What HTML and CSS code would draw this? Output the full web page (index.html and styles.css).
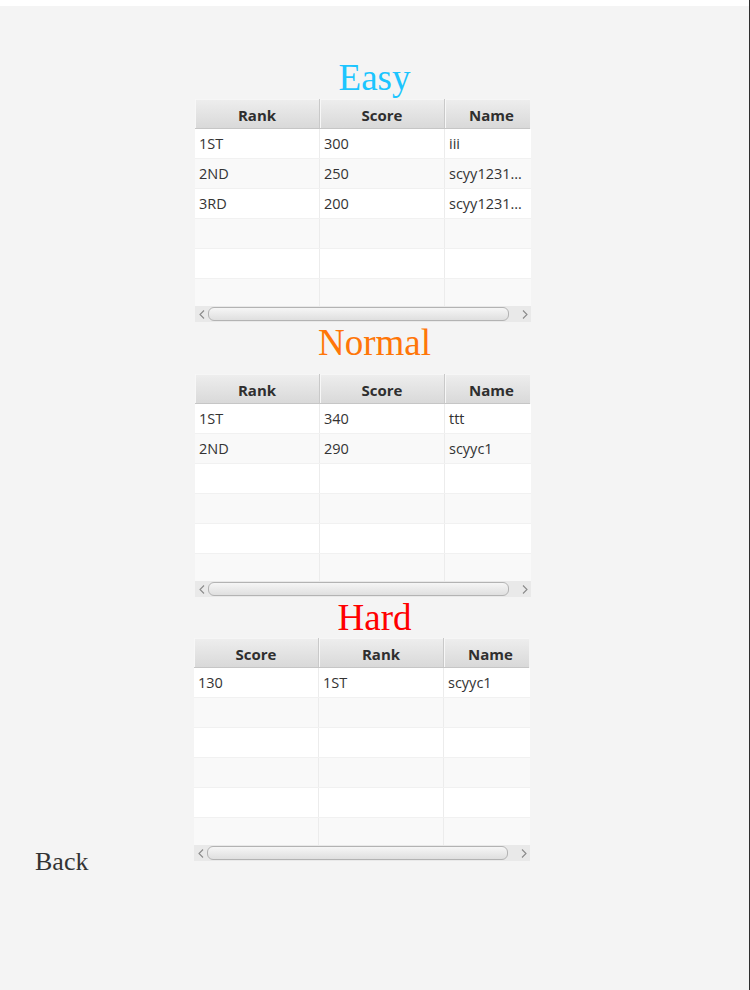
FILE: index.html
```html
<!DOCTYPE html>
<html lang="en">
<head>
<meta charset="utf-8">
<title>Leaderboard</title>
<link rel="stylesheet" href="styles.css">
</head>
<body>
<div class="app">
  <div class="topbar"></div>
  <main class="board">
    <section class="level level-easy">
      <h2 class="title easy">Easy</h2>
      <div class="row">
        <div class="side"></div>
        <div class="table">
          <div class="thead"><div class="th">Rank</div><div class="th">Score</div><div class="th">Name</div></div>
          <div class="tbody">
            <div class="tr"><div class="td">1ST</div><div class="td">300</div><div class="td">iii</div></div>
            <div class="tr"><div class="td">2ND</div><div class="td">250</div><div class="td">scyy1231…</div></div>
            <div class="tr"><div class="td">3RD</div><div class="td">200</div><div class="td">scyy1231…</div></div>
            <div class="tr"><div class="td"></div><div class="td"></div><div class="td"></div></div>
            <div class="tr"><div class="td"></div><div class="td"></div><div class="td"></div></div>
            <div class="tr"><div class="td"></div><div class="td"></div><div class="td"></div></div>
          </div>
          <div class="hscroll">
            <span class="btn"><svg width="6" height="9" viewBox="0 0 6 9"><path d="M5 0.5 L1 4.5 L5 8.5" fill="none" stroke="#8a8a8a" stroke-width="1.1"/></svg></span>
            <span class="track"><span class="thumb"></span></span>
            <span class="btn"><svg width="6" height="9" viewBox="0 0 6 9"><path d="M1 0.5 L5 4.5 L1 8.5" fill="none" stroke="#8a8a8a" stroke-width="1.1"/></svg></span>
          </div>
        </div>
      </div>
    </section>

    <section class="level level-normal">
      <h2 class="title normal">Normal</h2>
      <div class="row">
        <div class="side"></div>
        <div class="table">
          <div class="thead"><div class="th">Rank</div><div class="th">Score</div><div class="th">Name</div></div>
          <div class="tbody">
            <div class="tr"><div class="td">1ST</div><div class="td">340</div><div class="td">ttt</div></div>
            <div class="tr"><div class="td">2ND</div><div class="td">290</div><div class="td">scyyc1</div></div>
            <div class="tr"><div class="td"></div><div class="td"></div><div class="td"></div></div>
            <div class="tr"><div class="td"></div><div class="td"></div><div class="td"></div></div>
            <div class="tr"><div class="td"></div><div class="td"></div><div class="td"></div></div>
            <div class="tr"><div class="td"></div><div class="td"></div><div class="td"></div></div>
          </div>
          <div class="hscroll">
            <span class="btn"><svg width="6" height="9" viewBox="0 0 6 9"><path d="M5 0.5 L1 4.5 L5 8.5" fill="none" stroke="#8a8a8a" stroke-width="1.1"/></svg></span>
            <span class="track"><span class="thumb"></span></span>
            <span class="btn"><svg width="6" height="9" viewBox="0 0 6 9"><path d="M1 0.5 L5 4.5 L1 8.5" fill="none" stroke="#8a8a8a" stroke-width="1.1"/></svg></span>
          </div>
        </div>
      </div>
    </section>

    <section class="level level-hard">
      <h2 class="title hard">Hard</h2>
      <div class="row">
        <div class="side side-back"><a class="back" href="#">Back</a></div>
        <div class="table">
          <div class="thead"><div class="th">Score</div><div class="th">Rank</div><div class="th">Name</div></div>
          <div class="tbody">
            <div class="tr"><div class="td">130</div><div class="td">1ST</div><div class="td">scyyc1</div></div>
            <div class="tr"><div class="td"></div><div class="td"></div><div class="td"></div></div>
            <div class="tr"><div class="td"></div><div class="td"></div><div class="td"></div></div>
            <div class="tr"><div class="td"></div><div class="td"></div><div class="td"></div></div>
            <div class="tr"><div class="td"></div><div class="td"></div><div class="td"></div></div>
            <div class="tr"><div class="td"></div><div class="td"></div><div class="td"></div></div>
          </div>
          <div class="hscroll">
            <span class="btn"><svg width="6" height="9" viewBox="0 0 6 9"><path d="M5 0.5 L1 4.5 L5 8.5" fill="none" stroke="#8a8a8a" stroke-width="1.1"/></svg></span>
            <span class="track"><span class="thumb"></span></span>
            <span class="btn"><svg width="6" height="9" viewBox="0 0 6 9"><path d="M1 0.5 L5 4.5 L1 8.5" fill="none" stroke="#8a8a8a" stroke-width="1.1"/></svg></span>
          </div>
        </div>
      </div>
    </section>
  </main>
</div>
</body>
</html>
```

FILE: styles.css
```css
* { box-sizing: border-box; }

html, body {
  margin: 0;
  padding: 0;
  background: #f4f4f4;
}

.app {
  width: 750px;
  height: 990px;
  background: #f4f4f4;
  border-right: 1px solid #2e2e2e;
  overflow: hidden;
}

.topbar {
  height: 6px;
  background: #ffffff;
}

.board {
  display: flex;
  flex-direction: column;
  padding-top: 52px;
}

.title {
  margin: 0;
  height: 40px;
  line-height: 40px;
  text-align: center;
  font-family: "Liberation Serif", "Times New Roman", serif;
  font-weight: normal;
  font-size: 37px;
}

.title.easy { color: #1cc5ff; margin-bottom: 1px; }
.title.normal { color: #ff7608; margin-top: 1px; margin-bottom: 11px; }
.title.hard { color: #ff0000; margin-top: 1px; margin-bottom: 0; }

.row {
  display: flex;
  align-items: flex-start;
}

.side {
  width: 195px;
  flex: none;
}

.side-back {
  width: 194px;
  padding-top: 209px;
  padding-left: 35px;
}

.back {
  display: block;
  font-family: "Liberation Serif", "Times New Roman", serif;
  font-size: 26px;
  line-height: 30px;
  color: #333333;
  text-decoration: none;
}

.table {
  width: 336px;
  height: 223px;
  display: flex;
  flex-direction: column;
  overflow: hidden;
  font-family: "Open Sans", "Noto Sans", sans-serif;
  font-size: 14.5px;
  color: #333333;
}

.thead {
  display: grid;
  grid-template-columns: 125px 125px 94px;
  width: 335px;
  height: 30px;
  flex: none;
  overflow: hidden;
  background: linear-gradient(#eeeeee, #d9d9d9);
  border-bottom: 1px solid #c6c6c6;
}

.th {
  display: flex;
  align-items: center;
  justify-content: center;
  padding-top: 3px;
  font-size: 15px;
  font-weight: 700;
  color: #2f2f2f;
  border-right: 1px solid #c9c9c9;
  box-shadow: inset 1px 0 0 #f7f7f7, inset 0 1px 0 #f6f6f6;
}

.th:last-child { border-right: 1px solid #d0d0d0; }

.tbody {
  height: 177px;
  flex: none;
  overflow: hidden;
}

.tr {
  display: grid;
  grid-template-columns: 125px 125px 86px;
  height: 30px;
  background: #ffffff;
  border-bottom: 1px solid #f1f1f1;
}

.tr:nth-child(even) { background: #f9f9f9; }

.td {
  display: flex;
  align-items: center;
  padding-left: 4px;
  border-right: 1px solid #ececec;
  white-space: nowrap;
  overflow: hidden;
}

.td:last-child { border-right: none; }

.hscroll {
  height: 16px;
  flex: none;
  display: flex;
  align-items: stretch;
  background: #e9e9e9;
}

.btn {
  width: 13px;
  flex: none;
  display: flex;
  align-items: center;
  justify-content: center;
}

.track {
  flex: 1;
  display: flex;
  align-items: center;
}

.thumb {
  width: 301px;
  height: 14px;
  border: 1px solid #b3b3b3;
  border-radius: 6px;
  background: linear-gradient(#f6f6f6, #dfdfdf);
}
```
